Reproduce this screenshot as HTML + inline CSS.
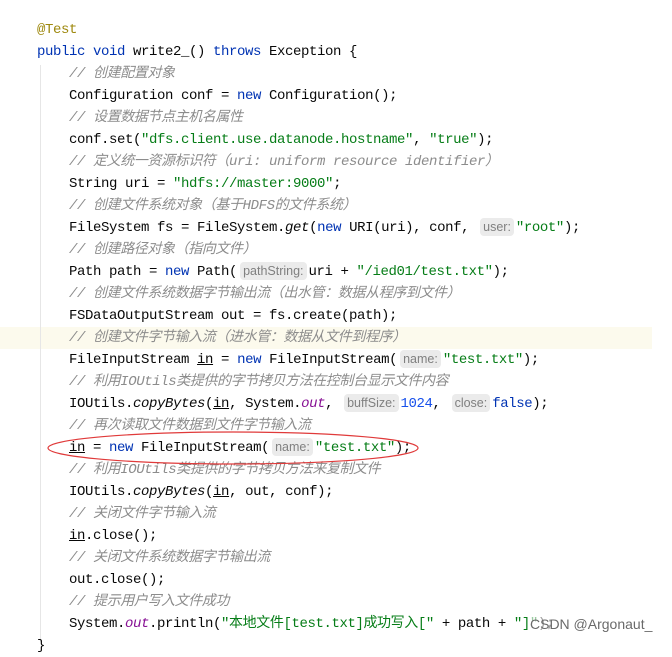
<!DOCTYPE html><html><head><meta charset="utf-8"><style>
body{margin:0;width:672px;height:642px;background:#fff;overflow:hidden;position:relative;font-family:"Liberation Mono","Noto Sans CJK SC",monospace;font-size:14px;letter-spacing:-0.4px;color:#080808}
.l{position:absolute;left:0;height:22px;line-height:22px;white-space:pre}
.k{color:#0033b3}.s{color:#067d17}.c{color:#8c8c8c;font-style:italic}
.a{color:#9e880d}.n{color:#1750eb}.f{color:#871094;font-style:italic}.i{font-style:italic}
.u{text-decoration:underline}
.h{display:inline-block;background:#ebebeb;color:#808080;font-family:"Liberation Sans",sans-serif;font-size:12.5px;letter-spacing:0;line-height:18px;border-radius:4px;padding:0 3px;margin:0 2px 0 3px}
.hl{position:absolute;left:0;top:327px;width:652px;height:22px;background:#fcfaed}
.g{position:absolute;left:40px;top:65px;width:1px;height:577px;background:#e6e6e6}
</style></head><body>
<div class="hl"></div><div class="g"></div>
<div class="l" style="top:19px;left:37px"><span class="a">@Test</span></div>
<div class="l" style="top:41px;left:37px"><span class="k">public void</span> write2_() <span class="k">throws</span> Exception {</div>
<div class="l" style="top:63px;left:69px"><span class="c">// 创建配置对象</span></div>
<div class="l" style="top:85px;left:69px">Configuration conf = <span class="k">new</span> Configuration();</div>
<div class="l" style="top:107px;left:69px"><span class="c">// 设置数据节点主机名属性</span></div>
<div class="l" style="top:129px;left:69px">conf.set(<span class="s">"dfs.client.use.datanode.hostname"</span>, <span class="s">"true"</span>);</div>
<div class="l" style="top:151px;left:69px"><span class="c">// 定义统一资源标识符（uri: uniform resource identifier）</span></div>
<div class="l" style="top:173px;left:69px">String uri = <span class="s">"hdfs://master:9000"</span>;</div>
<div class="l" style="top:195px;left:69px"><span class="c">// 创建文件系统对象（基于HDFS的文件系统）</span></div>
<div class="l" style="top:217px;left:69px">FileSystem fs = FileSystem.<span class="i">get</span>(<span class="k">new</span> URI(uri), conf, <span class="h">user:</span><span class="s">"root"</span>);</div>
<div class="l" style="top:239px;left:69px"><span class="c">// 创建路径对象（指向文件）</span></div>
<div class="l" style="top:261px;left:69px">Path path = <span class="k">new</span> Path(<span class="h">pathString:</span>uri + <span class="s">"/ied01/test.txt"</span>);</div>
<div class="l" style="top:283px;left:69px"><span class="c">// 创建文件系统数据字节输出流（出水管：数据从程序到文件）</span></div>
<div class="l" style="top:305px;left:69px">FSDataOutputStream out = fs.create(path);</div>
<div class="l" style="top:327px;left:69px"><span class="c">// 创建文件字节输入流（进水管：数据从文件到程序）</span></div>
<div class="l" style="top:349px;left:69px">FileInputStream <span class="u">in</span> = <span class="k">new</span> FileInputStream(<span class="h">name:</span><span class="s">"test.txt"</span>);</div>
<div class="l" style="top:371px;left:69px"><span class="c">// 利用IOUtils类提供的字节拷贝方法在控制台显示文件内容</span></div>
<div class="l" style="top:393px;left:69px">IOUtils.<span class="i">copyBytes</span>(<span class="u">in</span>, System.<span class="f">out</span>, <span class="h">buffSize:</span><span class="n">1024</span>, <span class="h">close:</span><span class="k">false</span>);</div>
<div class="l" style="top:415px;left:69px"><span class="c">// 再次读取文件数据到文件字节输入流</span></div>
<div class="l" style="top:437px;left:69px"><span class="u">in</span> = <span class="k">new</span> FileInputStream(<span class="h">name:</span><span class="s">"test.txt"</span>);</div>
<div class="l" style="top:459px;left:69px"><span class="c">// 利用IOUtils类提供的字节拷贝方法来复制文件</span></div>
<div class="l" style="top:481px;left:69px">IOUtils.<span class="i">copyBytes</span>(<span class="u">in</span>, out, conf);</div>
<div class="l" style="top:503px;left:69px"><span class="c">// 关闭文件字节输入流</span></div>
<div class="l" style="top:525px;left:69px"><span class="u">in</span>.close();</div>
<div class="l" style="top:547px;left:69px"><span class="c">// 关闭文件系统数据字节输出流</span></div>
<div class="l" style="top:569px;left:69px">out.close();</div>
<div class="l" style="top:591px;left:69px"><span class="c">// 提示用户写入文件成功</span></div>
<div class="l" style="top:613px;left:69px">System.<span class="f">out</span>.println(<span class="s">"本地文件[test.txt]成功写入["</span> + path + <span class="s">"]"</span>);</div>
<div class="l" style="top:635px;left:37px">}</div>
<div class="l" style="top:613px;left:530px;font-family:'Liberation Sans',sans-serif;font-size:14px;letter-spacing:0;color:#6a6a6a;background:rgba(255,255,255,0.6)">CSDN @Argonaut_</div>
<svg style="position:absolute;left:0;top:0" width="672" height="642"><ellipse cx="233" cy="448" rx="185" ry="16" fill="none" stroke="#e03a3a" stroke-width="1.2"/></svg>
</body></html>
